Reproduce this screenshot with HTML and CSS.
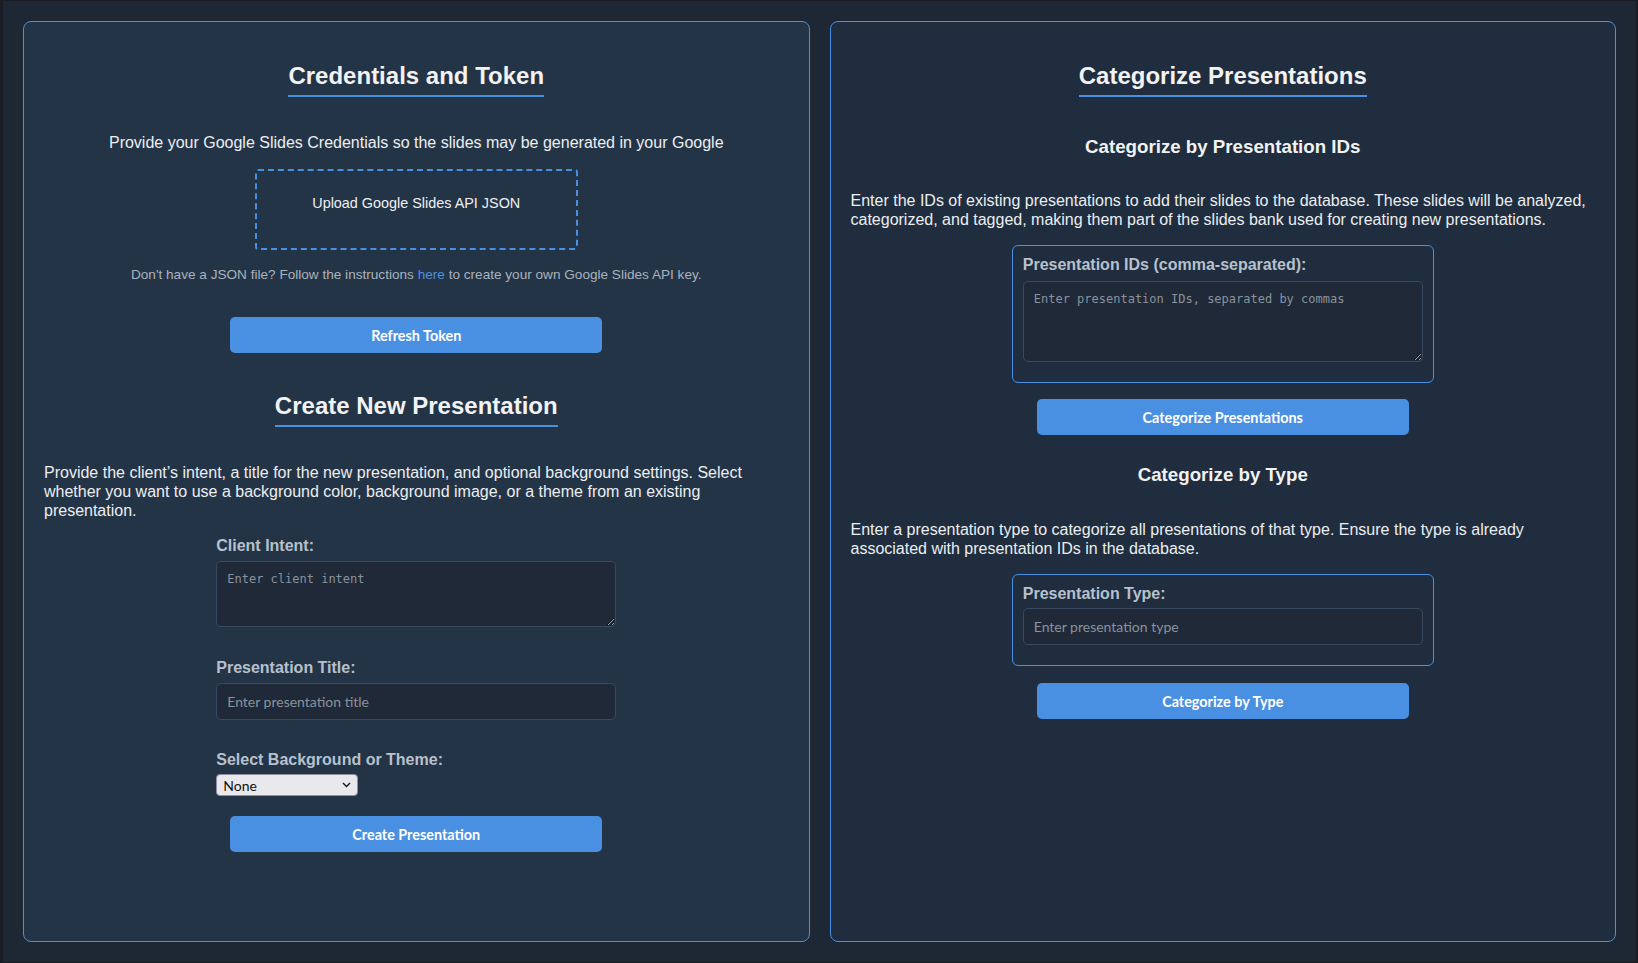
FILE: index.html
```html
<!DOCTYPE html>
<html lang="en">
<head>
<meta charset="utf-8">
<title>Slides Generator</title>
<link rel="stylesheet" href="styles.css">
</head>
<body>
<div class="page">
  <section class="panel panel-left">
    <h2 class="title title-first">Credentials and Token</h2>
    <p class="lead lead-center">Provide your Google Slides Credentials so the slides may be generated in your Google</p>
    <label class="upload">Upload Google Slides API JSON</label>
    <p class="hint">Don't have a JSON file? Follow the instructions <a href="#">here</a> to create your own Google Slides API key.</p>
    <button class="btn btn-refresh" type="button">Refresh Token</button>

    <h2 class="title title-second">Create New Presentation</h2>
    <p class="lead lead-create">Provide the client’s intent, a title for the new presentation, and optional background settings. Select whether you want to use a background color, background image, or a theme from an existing presentation.</p>
    <div class="form">
      <label class="field-label">Client Intent:</label>
      <textarea class="area area-intent" placeholder="Enter client intent"></textarea>
      <label class="field-label">Presentation Title:</label>
      <input class="text-input" type="text" placeholder="Enter presentation title">
      <label class="field-label label-select">Select Background or Theme:</label>
      <div class="select-wrap">
        <select class="select">
          <option>None</option>
        </select>
        <svg class="chevron" width="9" height="6" viewBox="0 0 9 6"><path d="M1 1l3.5 3.5L8 1" fill="none" stroke="#1a1a1a" stroke-width="1.4"/></svg>
      </div>
    </div>
    <button class="btn btn-create" type="button">Create Presentation</button>
  </section>

  <section class="panel panel-right">
    <h2 class="title title-first">Categorize Presentations</h2>
    <h3 class="sub sub-ids">Categorize by Presentation IDs</h3>
    <p class="lead lead-ids">Enter the IDs of existing presentations to add their slides to the database. These slides will be analyzed, categorized, and tagged, making them part of the slides bank used for creating new presentations.</p>
    <div class="box box-ids">
      <label class="field-label">Presentation IDs (comma-separated):</label>
      <textarea class="area area-ids" placeholder="Enter presentation IDs, separated by commas"></textarea>
    </div>
    <button class="btn btn-ids" type="button">Categorize Presentations</button>

    <h3 class="sub sub-type">Categorize by Type</h3>
    <p class="lead lead-type">Enter a presentation type to categorize all presentations of that type. Ensure the type is already associated with presentation IDs in the database.</p>
    <div class="box box-type">
      <label class="field-label">Presentation Type:</label>
      <input class="text-input input-type" type="text" placeholder="Enter presentation type">
    </div>
    <button class="btn btn-type" type="button">Categorize by Type</button>
  </section>
</div>
</body>
</html>
```

FILE: styles.css
```css
* {
  box-sizing: border-box;
}

html, body {
  margin: 0;
  padding: 0;
  background: #1e2734;
}

body {
  font-family: "Liberation Sans", Arial, sans-serif;
  color: #e6e8eb;
}

.page {
  height: 100vh;
  display: grid;
  grid-template-columns: 1fr 1fr;
  gap: 20px;
  padding: 20px;
  border-style: solid;
  border-color: #1a1d23;
  border-width: 1px 2px 1px 3px;
  background: #1e2734;
}

.panel {
  display: flex;
  flex-direction: column;
  align-items: stretch;
  border: 1px solid #4a90e2;
  border-radius: 8px;
  padding: 20px;
  min-width: 0;
}

.panel-left {
  background: #243447;
}

.panel-right {
  background: #1f2d3e;
}

.title {
  align-self: center;
  margin: 20px 0 0;
  font-size: 24px;
  line-height: 28px;
  font-weight: bold;
  color: #f2f2f2;
  padding-bottom: 5px;
  border-bottom: 2px solid #4a90e2;
}

.title-second {
  margin-top: 39px;
}

.lead {
  margin: 0;
  font-size: 16px;
  line-height: 19px;
  color: #eceef1;
}

.lead-center {
  text-align: center;
  margin-top: 36px;
}

.upload {
  align-self: center;
  width: 323px;
  height: 81px;
  margin-top: 17px;
  padding-top: 24px;
  border: 2px dashed #4a90e2;
  border-radius: 3px;
  text-align: center;
  font-size: 14.4px;
  color: #eef0f3;
  cursor: pointer;
}

.hint {
  margin: 17px 0 0;
  text-align: center;
  font-size: 13.6px;
  color: #a9b2bd;
}

.hint a {
  color: #4a90e2;
  text-decoration: none;
}

.btn {
  align-self: center;
  width: 50%;
  height: 36px;
  border: none;
  border-radius: 5px;
  background: #4a90e2;
  color: #ffffff;
  font-family: Lato, "Noto Sans", sans-serif;
  font-weight: bold;
  font-size: 14.4px;
  cursor: pointer;
}

.btn-refresh {
  margin-top: 35px;
}

.lead-create {
  margin-top: 36px;
}

.form {
  align-self: center;
  width: 400px;
  margin-top: 17px;
  display: flex;
  flex-direction: column;
}

.field-label {
  font-size: 16px;
  font-weight: bold;
  line-height: normal;
  color: #b7c1cd;
  margin-bottom: 6px;
}

.area {
  display: block;
  width: 100%;
  padding: 10px;
  border: 1px solid #3a4a5e;
  border-radius: 5px;
  background: #1f2938;
  color: #e6e8eb;
  font-family: "DejaVu Sans Mono", monospace;
  font-size: 12px;
}

.area::placeholder {
  color: #8a929c;
}

.area-intent {
  height: 66px;
  margin-bottom: 32px;
}

.text-input {
  display: block;
  width: 100%;
  height: 37px;
  padding: 0 10px;
  border: 1px solid #3a4a5e;
  border-radius: 5px;
  background: #1f2938;
  color: #e6e8eb;
  font-family: Lato, "Noto Sans", sans-serif;
  font-size: 14px;
  margin-bottom: 31px;
}

.text-input::placeholder {
  color: #8a929c;
}

.label-select {
  margin-bottom: 5px;
}

.select-wrap {
  position: relative;
  width: 142px;
  height: 22px;
}

.select {
  -webkit-appearance: none;
  appearance: none;
  width: 142px;
  height: 22px;
  padding: 0 0 0 6px;
  border: 1px solid #8f8f9d;
  border-radius: 4px;
  background: #e9e9ed;
  color: #111111;
  font-family: Lato, "Noto Sans", sans-serif;
  font-size: 14px;
}

.chevron {
  position: absolute;
  right: 7px;
  top: 8px;
  pointer-events: none;
}

.btn-create {
  margin-top: 20px;
}

.sub {
  margin: 39px 0 0;
  text-align: center;
  font-size: 18.72px;
  line-height: normal;
  font-weight: bold;
  color: #f2f2f2;
}

.sub-type {
  margin-top: 29px;
}

.lead-ids {
  margin-top: 33px;
}

.lead-type {
  margin-top: 34px;
}

.box {
  align-self: center;
  width: 422px;
  margin-top: 16px;
  padding: 10px;
  border: 1px solid #4a90e2;
  border-radius: 6px;
  display: flex;
  flex-direction: column;
}

.box .field-label {
  margin-bottom: 7px;
}

.area-ids {
  height: 81px;
  margin-bottom: 10px;
}

.input-type {
  margin-bottom: 10px;
}

.box-type .field-label {
  margin-bottom: 5px;
}

.btn-ids {
  margin-top: 16px;
}

.btn-type {
  margin-top: 17px;
}
```
